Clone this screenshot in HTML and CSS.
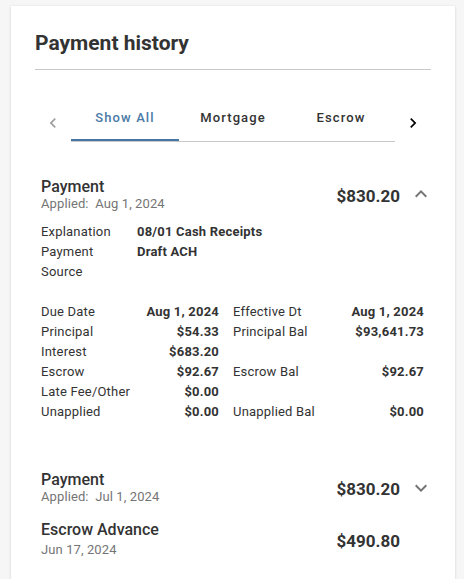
FILE: index.html
```html
<!DOCTYPE html>
<html lang="en">
<head>
<meta charset="utf-8">
<title>Payment history</title>
<link rel="stylesheet" href="styles.css">
</head>
<body>
<div class="card">
  <h2 class="title">Payment history</h2>
  <div class="tabs">
    <button class="scroll-btn disabled" aria-label="Previous">
      <svg viewBox="0 0 24 24" width="20" height="20"><path d="M15.41 7.41L14 6l-6 6 6 6 1.41-1.41L10.83 12z"/></svg>
    </button>
    <div class="tab-list">
      <div class="tab active">Show All</div>
      <div class="tab">Mortgage</div>
      <div class="tab">Escrow</div>
    </div>
    <button class="scroll-btn" aria-label="Next">
      <svg viewBox="0 0 24 24" width="20" height="20"><path d="M10 6L8.59 7.41 13.17 12l-4.58 4.59L10 18l6-6z"/></svg>
    </button>
  </div>

  <div class="history">
    <div class="entry">
      <div class="entry-head">
        <div class="entry-info">
          <div class="entry-type">Payment</div>
          <div class="entry-date">Applied:&nbsp; Aug 1, 2024</div>
        </div>
        <div class="entry-amount">$830.20</div>
        <span class="caret up"><svg viewBox="0 0 24 24" width="24" height="24"><path d="M12 8l-6 6 1.41 1.41L12 10.83l4.59 4.58L18 14z"/></svg></span>
      </div>
      <div class="meta">
        <div class="meta-label">Explanation</div><div class="meta-value">08/01 Cash Receipts</div>
        <div class="meta-label">Payment<br>Source</div><div class="meta-value">Draft ACH</div>
      </div>
      <div class="breakdown">
        <div class="b-label">Due Date</div><div class="b-value">Aug 1, 2024</div><div class="b-label second">Effective Dt</div><div class="b-value">Aug 1, 2024</div>
        <div class="b-label">Principal</div><div class="b-value">$54.33</div><div class="b-label second">Principal Bal</div><div class="b-value">$93,641.73</div>
        <div class="b-label">Interest</div><div class="b-value">$683.20</div><div class="b-label second"></div><div class="b-value"></div>
        <div class="b-label">Escrow</div><div class="b-value">$92.67</div><div class="b-label second">Escrow Bal</div><div class="b-value">$92.67</div>
        <div class="b-label">Late Fee/Other</div><div class="b-value">$0.00</div><div class="b-label second"></div><div class="b-value"></div>
        <div class="b-label">Unapplied</div><div class="b-value">$0.00</div><div class="b-label second">Unapplied Bal</div><div class="b-value">$0.00</div>
      </div>
    </div>

    <div class="entry collapsed">
      <div class="entry-head">
        <div class="entry-info">
          <div class="entry-type">Payment</div>
          <div class="entry-date">Applied:&nbsp; Jul 1, 2024</div>
        </div>
        <div class="entry-amount">$830.20</div>
        <span class="caret"><svg viewBox="0 0 24 24" width="24" height="24"><path d="M16.59 8.59L12 13.17 7.41 8.59 6 10l6 6 6-6z"/></svg></span>
      </div>
    </div>

    <div class="entry collapsed tight">
      <div class="entry-head">
        <div class="entry-info">
          <div class="entry-type">Escrow Advance</div>
          <div class="entry-date plain">Jun 17, 2024</div>
        </div>
        <div class="entry-amount">$490.80</div>
        <span class="caret empty"></span>
      </div>
    </div>
  </div>
</div>
</body>
</html>
```

FILE: styles.css
```css
* { box-sizing: border-box; }

html, body {
  margin: 0;
  padding: 0;
  background: #f6f6f6;
  font-family: Roboto, "Liberation Sans", Arial, sans-serif;
  color: #333;
}

body {
  height: 579px;
  overflow: hidden;
  padding: 6px 9px 0 11px;
}

.card {
  background: #fff;
  box-shadow: 0 1px 3px rgba(0, 0, 0, 0.12), 0 0 1px rgba(0, 0, 0, 0.08);
  padding: 25px 24px 60px;
}

.title {
  margin: 0;
  font-size: 21px;
  line-height: 24px;
  font-weight: 700;
  color: #333;
  padding-bottom: 14px;
  border-bottom: 1px solid #c9c9c9;
}

.tabs {
  display: flex;
  margin-top: 25px;
}

.scroll-btn {
  width: 36px;
  flex: 0 0 36px;
  border: 0;
  background: none;
  padding: 8px 0 0;
  margin: 0;
  display: flex;
  align-items: center;
  justify-content: center;
  fill: #000;
}

.scroll-btn.disabled { fill: #9e9e9e; }

.tab-list {
  display: flex;
  flex: 1;
  border-bottom: 1px solid #c9c9c9;
}

.tab {
  flex: 1;
  text-align: center;
  font-size: 13px;
  line-height: 16px;
  font-weight: 500;
  letter-spacing: 1.1px;
  padding: 15px 0 15px;
  color: #333;
}

.tab.active {
  color: #4a7aa6;
  box-shadow: inset 0 -2px 0 #4677a4;
}

.history {
  margin-top: 35px;
  padding: 0 6px;
}

.entry-head {
  display: flex;
  align-items: center;
}

.entry-info { flex: 1; }

.entry-type {
  font-size: 16px;
  line-height: 19px;
  font-weight: 500;
  color: #333;
}

.entry-date {
  font-size: 13px;
  line-height: 16px;
  color: #757575;
  letter-spacing: 0.1px;
}

.entry-date.plain { padding-top: 3px; }

.entry-amount {
  font-size: 17px;
  line-height: 20px;
  font-weight: 700;
  color: #333;
  margin-top: 3px;
}

.caret {
  width: 24px;
  height: 24px;
  margin-left: 9px;
  margin-right: -8px;
  fill: #757575;
  display: block;
}

.caret svg { display: block; }

.caret.up { margin-bottom: 2px; }

.meta {
  display: grid;
  grid-template-columns: 96px 1fr;
  margin-top: 10px;
  font-size: 13px;
  line-height: 20px;
  letter-spacing: 0.2px;
}

.meta-value { font-weight: 700; }

.breakdown {
  display: grid;
  grid-template-columns: 96px 82px 118px 87px;
  margin-top: 20px;
  font-size: 13px;
  line-height: 20px;
  letter-spacing: 0.2px;
}

.b-label { white-space: nowrap; }
.b-label.second { padding-left: 14px; }

.b-value {
  text-align: right;
  font-weight: 700;
  white-space: nowrap;
}

.entry.collapsed { margin-top: 48px; }
.entry.collapsed.tight { margin-top: 15px; }
```
